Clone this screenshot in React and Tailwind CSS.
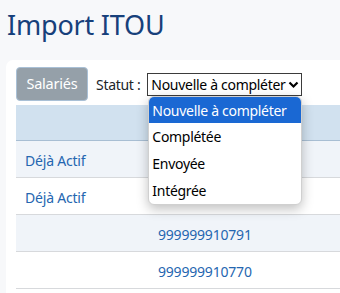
import React from "react";

export default function App() {
  const rows = [
    { a: "Déjà Actif", b: "", bg: "bg-[#f0f4f9]" },
    { a: "Déjà Actif", b: "", bg: "bg-white" },
    { a: "", b: "999999910791", bg: "bg-[#f0f4f9]" },
    { a: "", b: "999999910770", bg: "bg-white" },
  ];
  return (
    <div
      className="w-[340px] h-[293px] overflow-hidden bg-[#f7f8fa] relative"
      style={{ fontFamily: '"Noto Sans", "Open Sans", sans-serif' }}
    >
      <h1 className="pl-[7px] pt-[9px] text-[27px] leading-[32px] tracking-[-0.2px] text-[#17407b] font-normal">
        Import ITOU
      </h1>
      <div className="mt-[19px] ml-[6px] bg-white rounded-tl-[7px] pl-[10px] pt-[7px] h-[300px]">
        <div className="flex items-center h-[34px]">
          <button className="h-[34px] w-[72px] rounded-[4px] bg-[#95a0a9] border border-[#a9c0d6] text-white text-[14.5px] tracking-[-0.2px]">
            Salariés
          </button>
          <span className="ml-[8px] text-[14px] tracking-[-0.3px] text-[#212529] whitespace-nowrap">Statut :</span>
          <div className="relative ml-[7px] mt-[1px]">
            <div className="h-[23px] w-[155px] border border-[#3b3b3b] flex items-center pl-[3px] text-[14px] tracking-[-0.3px] text-black whitespace-nowrap">
              <span>Nouvelle à compléter</span>
              <svg className="ml-auto mr-[2px] shrink-0" width="11" height="8" viewBox="0 0 11 8">
                <path d="M1.5 1.5 L5.5 5.5 L9.5 1.5" fill="none" stroke="#000" strokeWidth="2.2" />
              </svg>
            </div>
            <div className="absolute left-[1px] top-[23px] w-[154px] bg-white rounded-[6px] shadow-[0_4px_12px_rgba(0,0,0,0.25)] border border-[#d0d0d0] overflow-hidden z-10 text-[14px] tracking-[-0.3px] text-black whitespace-nowrap">
              <div className="h-[26px] flex items-center pl-[3px] bg-[#1a68d3] text-white">Nouvelle à compléter</div>
              <div className="h-[27px] flex items-center pl-[3px]">Complétée</div>
              <div className="h-[27px] flex items-center pl-[3px]">Envoyée</div>
              <div className="h-[27px] flex items-center pl-[3px]">Intégrée</div>
            </div>
          </div>
        </div>
        <div className="mt-[4px]">
          <div className="h-[36px] bg-[#d1e1ef] border-b border-[#a8bed3]" />
          {rows.map((r, i) => (
            <div
              key={i}
              className={`h-[37px] ${r.bg} border-b border-[#d7d9dc] grid grid-cols-[133px_1fr] items-center pt-[2px] text-[14px] tracking-[-0.2px] text-[#2566b0]`}
            >
              <span className="pl-[9px]">{r.a}</span>
              <span className="pl-[9px]">{r.b}</span>
            </div>
          ))}
        </div>
      </div>
    </div>
  );
}
